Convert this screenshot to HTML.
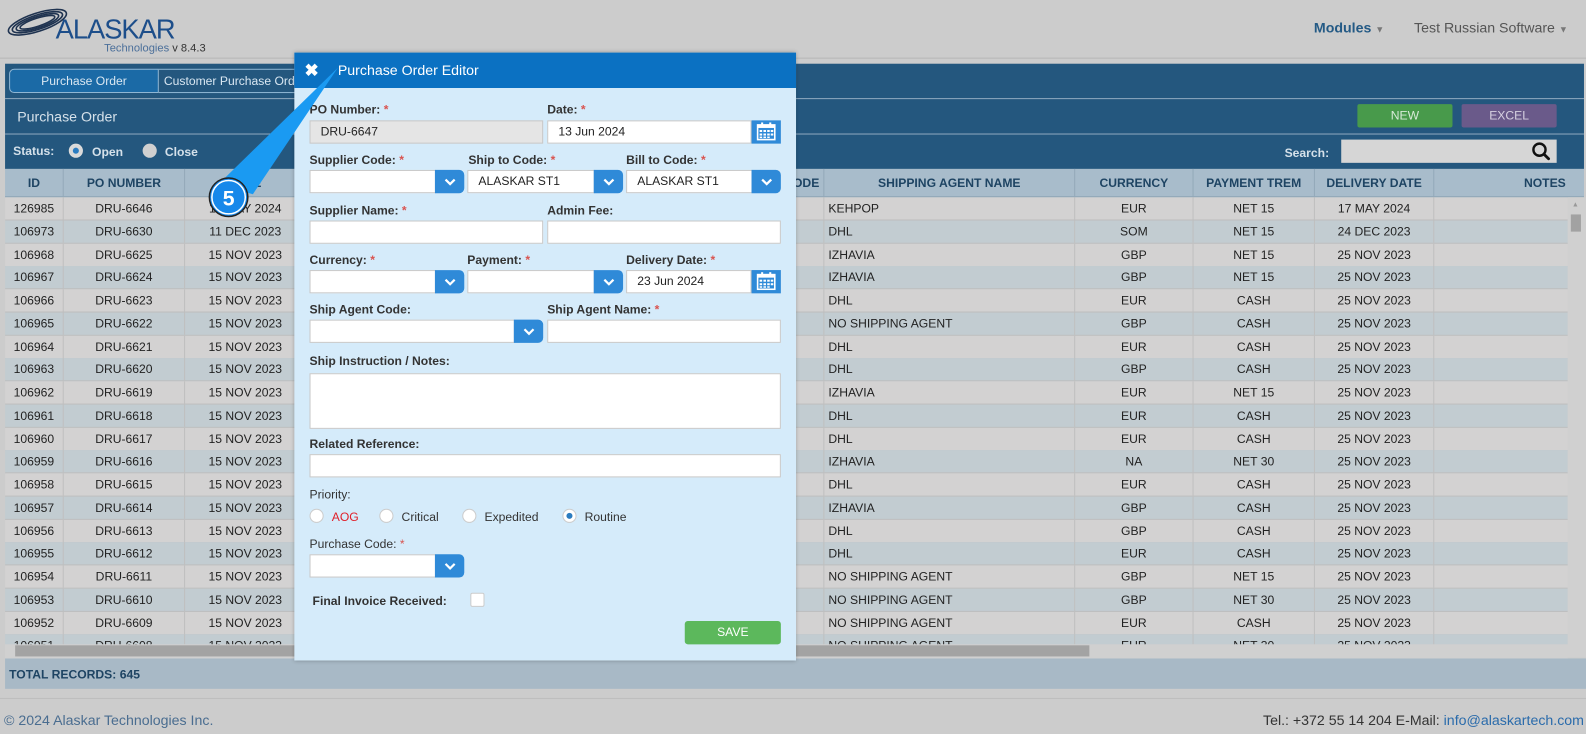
<!DOCTYPE html>
<html><head><meta charset="utf-8">
<style>
*{box-sizing:border-box;margin:0;padding:0}
html,body{width:1586px;height:734px;overflow:hidden;background:#cccccc}
#wrap{position:absolute;left:0;top:0;width:1568px;height:726px;transform:scale(1.01148);transform-origin:0 0;font-family:"Liberation Sans",Arial,sans-serif;font-size:12px;color:#222}
.abs{position:absolute}
.hdrline{position:absolute;left:0;top:57px;width:1568px;height:1px;background:#b8b8b8}
.band{position:absolute;left:5px;width:1561px;background:#24577e}
.th{position:absolute;top:167px;height:28px;line-height:28px;text-align:center;font-weight:bold;color:#1e4463;font-size:12px;border-right:1px solid #93a9b9}
.row{position:absolute;left:5px;width:1545px;height:23px;line-height:23px}
.c{position:absolute;top:0;height:100%;text-align:center;font-size:12px;color:#222;border-right:1px solid #bfbfbf}
.modal{position:absolute;left:291px;top:52px;width:496px;height:601px;background:#d5ebfa;box-shadow:0 0 4px rgba(0,0,0,.3)}
.mh{position:absolute;left:0;top:0;width:496px;height:35px;background:#0b71c2;color:#fff;font-size:14px;line-height:35px}
.lb{position:absolute;font-weight:bold;font-size:12px;color:#333}
.lb i{color:#d9534f;font-style:normal}
.in{position:absolute;height:23px;background:#fff;border:1px solid #c8c8c8;font-size:12px;line-height:21px;padding-left:10px;color:#222}
.btn{position:absolute;height:23px;background:#2f8ad8;border-radius:0 5px 5px 0}
.btn svg{position:absolute;left:50%;top:50%;transform:translate(-50%,-50%)}
.cal{position:absolute;width:29px;height:23px;background:#2f8ad8}
.rad{position:absolute;width:14px;height:14px;border-radius:50%;background:#fff;border:1px solid #ccc}
</style></head><body>
<div id="wrap">
<svg class="abs" style="left:4px;top:6px" width="70" height="34" viewBox="0 0 70 34">
<g fill="none" stroke="#1f3350" stroke-width="1.6">
<ellipse cx="33" cy="16" rx="30" ry="9" transform="rotate(-18 33 16)"/>
<ellipse cx="33" cy="16" rx="26" ry="7" transform="rotate(-18 33 16)"/>
<ellipse cx="33" cy="16" rx="22" ry="5.5" transform="rotate(-18 33 16)"/>
<ellipse cx="33" cy="16" rx="18" ry="4" transform="rotate(-18 33 16)"/>
</g></svg>
<div class="abs" style="left:55px;top:14px;font-size:27px;color:#1d4e8a;letter-spacing:-1px">ALASKAR</div>
<div class="abs" style="left:103px;top:42px;font-size:11px;color:#4b6f9a">Technologies <span style="color:#333;font-size:11px">v 8.4.3</span></div>
<div class="abs" style="left:1299px;top:19px;font-size:14px;font-weight:bold;color:#245a85">Modules <span style="font-size:9px;color:#777">▼</span></div>
<div class="abs" style="left:1398px;top:19px;font-size:14px;color:#555">Test Russian Software <span style="font-size:9px;color:#777">▼</span></div>
<div class="hdrline"></div>

<div class="band" style="top:63px;height:104px"></div>
<div class="abs" style="left:5px;top:97px;width:1561px;height:1px;background:#8fa9bf"></div>
<div class="abs" style="left:5px;top:132px;width:1561px;height:1px;background:#8fa9bf"></div>
<div class="abs" style="left:9px;top:68px;width:148px;height:24px;background:#1b6aa6;border:1px solid #8fb6d4;border-radius:5px 0 0 5px;color:#d9e7f2;text-align:center;line-height:22px;font-size:12px">Purchase Order</div>
<div class="abs" style="left:157px;top:68px;width:140px;height:24px;border:1px solid #8fb6d4;border-left:none;color:#d9e7f2;line-height:22px;font-size:12px;padding-left:5px;overflow:hidden;white-space:nowrap">Customer Purchase Order</div>
<div class="abs" style="left:17px;top:107px;font-size:14px;color:#d5e1ea">Purchase Order</div>
<div class="abs" style="left:1342px;top:103px;width:94px;height:23px;background:#489a4b;border-radius:2px;color:#d8ead8;text-align:center;line-height:22px;font-size:12px">NEW</div>
<div class="abs" style="left:1445px;top:103px;width:94px;height:23px;background:#6a5a8a;border-radius:2px;color:#d6d0e0;text-align:center;line-height:22px;font-size:12px">EXCEL</div>
<div class="abs" style="left:13px;top:142px;font-weight:bold;color:#d5e1ea">Status:</div>
<div class="rad" style="left:68px;top:142px;background:#d9d9d9;border-color:#ddd"></div><div class="abs" style="left:72px;top:146px;width:6px;height:6px;border-radius:50%;background:#2b7cc0"></div>
<div class="abs" style="left:91px;top:143px;font-weight:bold;color:#d5e1ea">Open</div>
<div class="rad" style="left:141px;top:142px;background:#d0d0d0;border-color:#d0d0d0"></div>
<div class="abs" style="left:163px;top:143px;font-weight:bold;color:#d5e1ea">Close</div>
<div class="abs" style="left:1270px;top:144px;font-weight:bold;color:#d5e1ea">Search:</div>
<div class="abs" style="left:1326px;top:138px;width:213px;height:23px;background:#d6d6d6"></div>
<svg class="abs" style="left:1514px;top:140px" width="19" height="19" viewBox="0 0 19 19"><circle cx="8" cy="8" r="6" fill="none" stroke="#111" stroke-width="2.4"/><path d="M12.5 12.5 L17 17" stroke="#111" stroke-width="2.8" stroke-linecap="round"/></svg>

<div class="abs" style="left:5px;top:167px;width:1561px;height:28px;background:#a8bccb;border-bottom:1px solid #8ea5b6"></div>
<div class="th" style="left:5px;width:58px">ID</div>
<div class="th" style="left:63px;width:120px">PO NUMBER</div>
<div class="th" style="left:183px;width:120px">DATE</div>
<div class="th" style="left:760px;width:55px;text-align:right;padding-right:4px">CODE</div>
<div class="th" style="left:815px;width:248px">SHIPPING AGENT NAME</div>
<div class="th" style="left:1063px;width:117px">CURRENCY</div>
<div class="th" style="left:1180px;width:120px">PAYMENT TREM</div>
<div class="th" style="left:1300px;width:118px">DELIVERY DATE</div>
<div class="th" style="left:1418px;width:150px;text-align:right;border:none;overflow:hidden;white-space:nowrap;padding-right:0">NOTES&nbsp;&nbsp;&nbsp;&nbsp;&nbsp;&nbsp;</div>

<div class="abs" style="left:5px;top:195px;width:1545px;height:442px;overflow:hidden">
<div id="rows"></div>
</div>
<div class="abs" style="left:1550px;top:195px;width:18px;height:455px;background:#d0d0d0"></div>
<div class="abs" style="left:1553px;top:212px;width:10px;height:17px;background:#a2a2a2"></div>
<div class="abs" style="left:1554px;top:199px;font-size:7px;color:#999">▲</div>
<div class="abs" style="left:5px;top:637px;width:1545px;height:14px;background:#d0d0d0"></div>
<div class="abs" style="left:15px;top:638px;width:1062px;height:11px;background:#a3a3a3"></div>
<div class="abs" style="left:5px;top:651px;width:1563px;height:30px;background:#a8b9c6"></div>
<div class="abs" style="left:9px;top:660px;font-weight:bold;color:#1e4463;font-size:12px">TOTAL RECORDS: 645</div>
<div class="abs" style="left:0;top:690px;width:1568px;height:1px;background:#bdbdbd"></div>
<div class="abs" style="left:4px;top:704px;font-size:14px;color:#4a6d90">© 2024 Alaskar Technologies Inc.</div>
<div class="abs" style="right:2px;top:704px;font-size:14px;color:#333;white-space:nowrap">Tel.: +372 55 14 204 E-Mail: <span style="color:#2a6bab">info@alaskartech.com</span></div>

<div class="modal">
<div class="mh"><span style="position:absolute;left:10px;top:0;font-size:17px;font-weight:bold">✖</span><span style="position:absolute;left:43px">Purchase Order Editor</span></div>
</div>
<div id="form"></div>

<svg class="abs" style="left:0;top:0" width="400" height="240">
<polygon points="334,67 216,182 250,192" fill="#1a9af2"/>
<circle cx="226" cy="195" r="19" fill="#1788ea" stroke="#222" stroke-width="1.5"/>
<circle cx="226" cy="195" r="16.5" fill="none" stroke="#fff" stroke-width="1.5"/>
<text x="226" y="203" text-anchor="middle" font-family="Liberation Sans" font-weight="bold" font-size="21" fill="#fff">5</text>
</svg>
</div>

<script>
var data=[["126985","DRU-6646","17 MAY 2024","KEHPOP","EUR","NET 15","17 MAY 2024"],
["106973","DRU-6630","11 DEC 2023","DHL","SOM","NET 15","24 DEC 2023"],
["106968","DRU-6625","","IZHAVIA","GBP","NET 15",""],
["106967","DRU-6624","","IZHAVIA","GBP","NET 15",""],
["106966","DRU-6623","","DHL","EUR","CASH",""],
["106965","DRU-6622","","NO SHIPPING AGENT","GBP","CASH",""],
["106964","DRU-6621","","DHL","EUR","CASH",""],
["106963","DRU-6620","","DHL","GBP","CASH",""],
["106962","DRU-6619","","IZHAVIA","EUR","NET 15",""],
["106961","DRU-6618","","DHL","EUR","CASH",""],
["106960","DRU-6617","","DHL","EUR","CASH",""],
["106959","DRU-6616","","IZHAVIA","NA","NET 30",""],
["106958","DRU-6615","","DHL","EUR","CASH",""],
["106957","DRU-6614","","IZHAVIA","GBP","CASH",""],
["106956","DRU-6613","","DHL","GBP","CASH",""],
["106955","DRU-6612","","DHL","EUR","CASH",""],
["106954","DRU-6611","","NO SHIPPING AGENT","GBP","NET 15",""],
["106953","DRU-6610","","NO SHIPPING AGENT","GBP","NET 30",""],
["106952","DRU-6609","","NO SHIPPING AGENT","EUR","CASH",""],
["106951","DRU-6608","","NO SHIPPING AGENT","EUR","NET 30",""]];
var h="";
data.forEach(function(d,i){
var bg=i%2?"#c2ccd1":"#d3d2d2";
var top=i*22.75;
h+='<div class="row" style="left:0;top:'+top+'px;background:'+bg+';border-bottom:1px solid #bdbdbd">'+
'<div class="c" style="left:0;width:58px">'+d[0]+'</div>'+
'<div class="c" style="left:58px;width:120px">'+d[1]+'</div>'+
'<div class="c" style="left:178px;width:120px">'+(d[2]||"15 NOV 2023")+'</div>'+
'<div class="c" style="left:755px;width:55px"></div>'+
'<div class="c" style="left:810px;width:248px;text-align:left;padding-left:4px">'+d[3]+'</div>'+
'<div class="c" style="left:1058px;width:117px">'+d[4]+'</div>'+
'<div class="c" style="left:1175px;width:120px">'+d[5]+'</div>'+
'<div class="c" style="left:1295px;width:118px">'+(d[6]||"25 NOV 2023")+'</div>'+
'</div>';});
document.getElementById("rows").innerHTML=h;

var chev='<svg width="12" height="8" viewBox="0 0 12 8"><path d="M1.5 1.5 L6 6 L10.5 1.5" fill="none" stroke="#fff" stroke-width="2.2"/></svg>';
var calsvg='<svg width="19" height="18" viewBox="0 0 19 18" style="position:absolute;left:5px;top:2px"><rect x="1" y="2.5" width="17" height="14.5" fill="none" stroke="#fff" stroke-width="1.6"/><rect x="1" y="2.5" width="17" height="3" fill="#fff"/><rect x="4.5" y="0" width="2" height="4" fill="#fff"/><rect x="12.5" y="0" width="2" height="4" fill="#fff"/><g fill="#fff"><rect x="3" y="7.5" width="2.5" height="2"/><rect x="6.8" y="7.5" width="2.5" height="2"/><rect x="10.5" y="7.5" width="2.5" height="2"/><rect x="14" y="7.5" width="2.5" height="2"/><rect x="3" y="11" width="2.5" height="2"/><rect x="6.8" y="11" width="2.5" height="2"/><rect x="10.5" y="11" width="2.5" height="2"/><rect x="14" y="11" width="2.5" height="2"/><rect x="3" y="14" width="2.5" height="1.5"/><rect x="6.8" y="14" width="2.5" height="1.5"/><rect x="10.5" y="14" width="2.5" height="1.5"/></g></svg>';
function lb(x,y,t,req){return '<div class="lb" style="left:'+x+'px;top:'+(y-6)+'px">'+t+(req?' <i>*</i>':'')+'</div>';}
function inp(x,y,w,t,bg){return '<div class="in" style="left:'+x+'px;top:'+y+'px;width:'+w+'px;'+(bg?'background:'+bg+';':'')+'">'+(t||'')+'</div>';}
function sel(x,y,w,t){return inp(x,y,w-28,t)+'<div class="btn" style="left:'+(x+w-29)+'px;top:'+y+'px;width:29px">'+chev+'</div>';}
function dt(x,y,w,t){return inp(x,y,w-29,t)+'<div class="cal" style="left:'+(x+w-29)+'px;top:'+y+'px">'+calsvg+'</div>';}
var f="";
f+=lb(306,107,"PO Number:",1)+lb(541,107,"Date:",1);
f+=inp(306,119,231,"DRU-6647","#e5e5e5")+dt(541,119,231,"13 Jun 2024");
f+=lb(306,157,"Supplier Code:",1)+lb(463,157,"Ship to Code:",1)+lb(619,157,"Bill to Code:",1);
f+=sel(306,168,153,"")+sel(462,168,154,"ALASKAR ST1")+sel(619,168,153,"ALASKAR ST1");
f+=lb(306,207,"Supplier Name:",1)+lb(541,207,"Admin Fee:");
f+=inp(306,218,231)+inp(541,218,231);
f+=lb(306,256,"Currency:",1)+lb(462,256,"Payment:",1)+lb(619,256,"Delivery Date:",1);
f+=sel(306,267,153,"")+sel(462,267,154,"")+dt(619,267,153,"23 Jun 2024");
f+=lb(306,305,"Ship Agent Code:")+lb(541,305,"Ship Agent Name:",1);
f+=sel(306,316,231,"")+inp(541,316,231);
f+=lb(306,356,"Ship Instruction / Notes:");
f+='<div class="in" style="left:306px;top:369px;width:466px;height:55px"></div>';
f+=lb(306,438,"Related Reference:");
f+=inp(306,449,466);
f+='<div class="abs" style="left:306px;top:482px;font-size:12px;color:#333">Priority:</div>';
[[306,"AOG",328],[375,"Critical",397],[457,"Expedited",479],[556,"Routine",578]].forEach(function(r,i){
f+='<div class="rad" style="left:'+r[0]+'px;top:503px"></div>';
f+='<div class="abs" style="left:'+r[2]+'px;top:504px;font-size:12px;color:'+(i==0?'#e0202a':'#333')+'">'+r[1]+'</div>';});
f+='<div class="abs" style="left:560px;top:507px;width:6px;height:6px;border-radius:50%;background:#2b7cc0"></div>';
f+='<div class="abs" style="left:306px;top:531px;font-size:12px;color:#333">Purchase Code: <i style="color:#d9534f;font-style:normal">*</i></div>';
f+=sel(306,548,153,"");
f+='<div class="lb" style="left:309px;top:587px">Final Invoice Received:</div>';
f+='<div class="abs" style="left:465px;top:586px;width:14px;height:14px;background:#fff;border:1px solid #ccc;border-radius:2px"></div>';
f+='<div class="abs" style="left:677px;top:614px;width:95px;height:23px;background:#5cb85c;border-radius:3px;color:#fff;text-align:center;line-height:22px;font-size:12px">SAVE</div>';
document.getElementById("form").innerHTML=f;
</script>
</body></html>
